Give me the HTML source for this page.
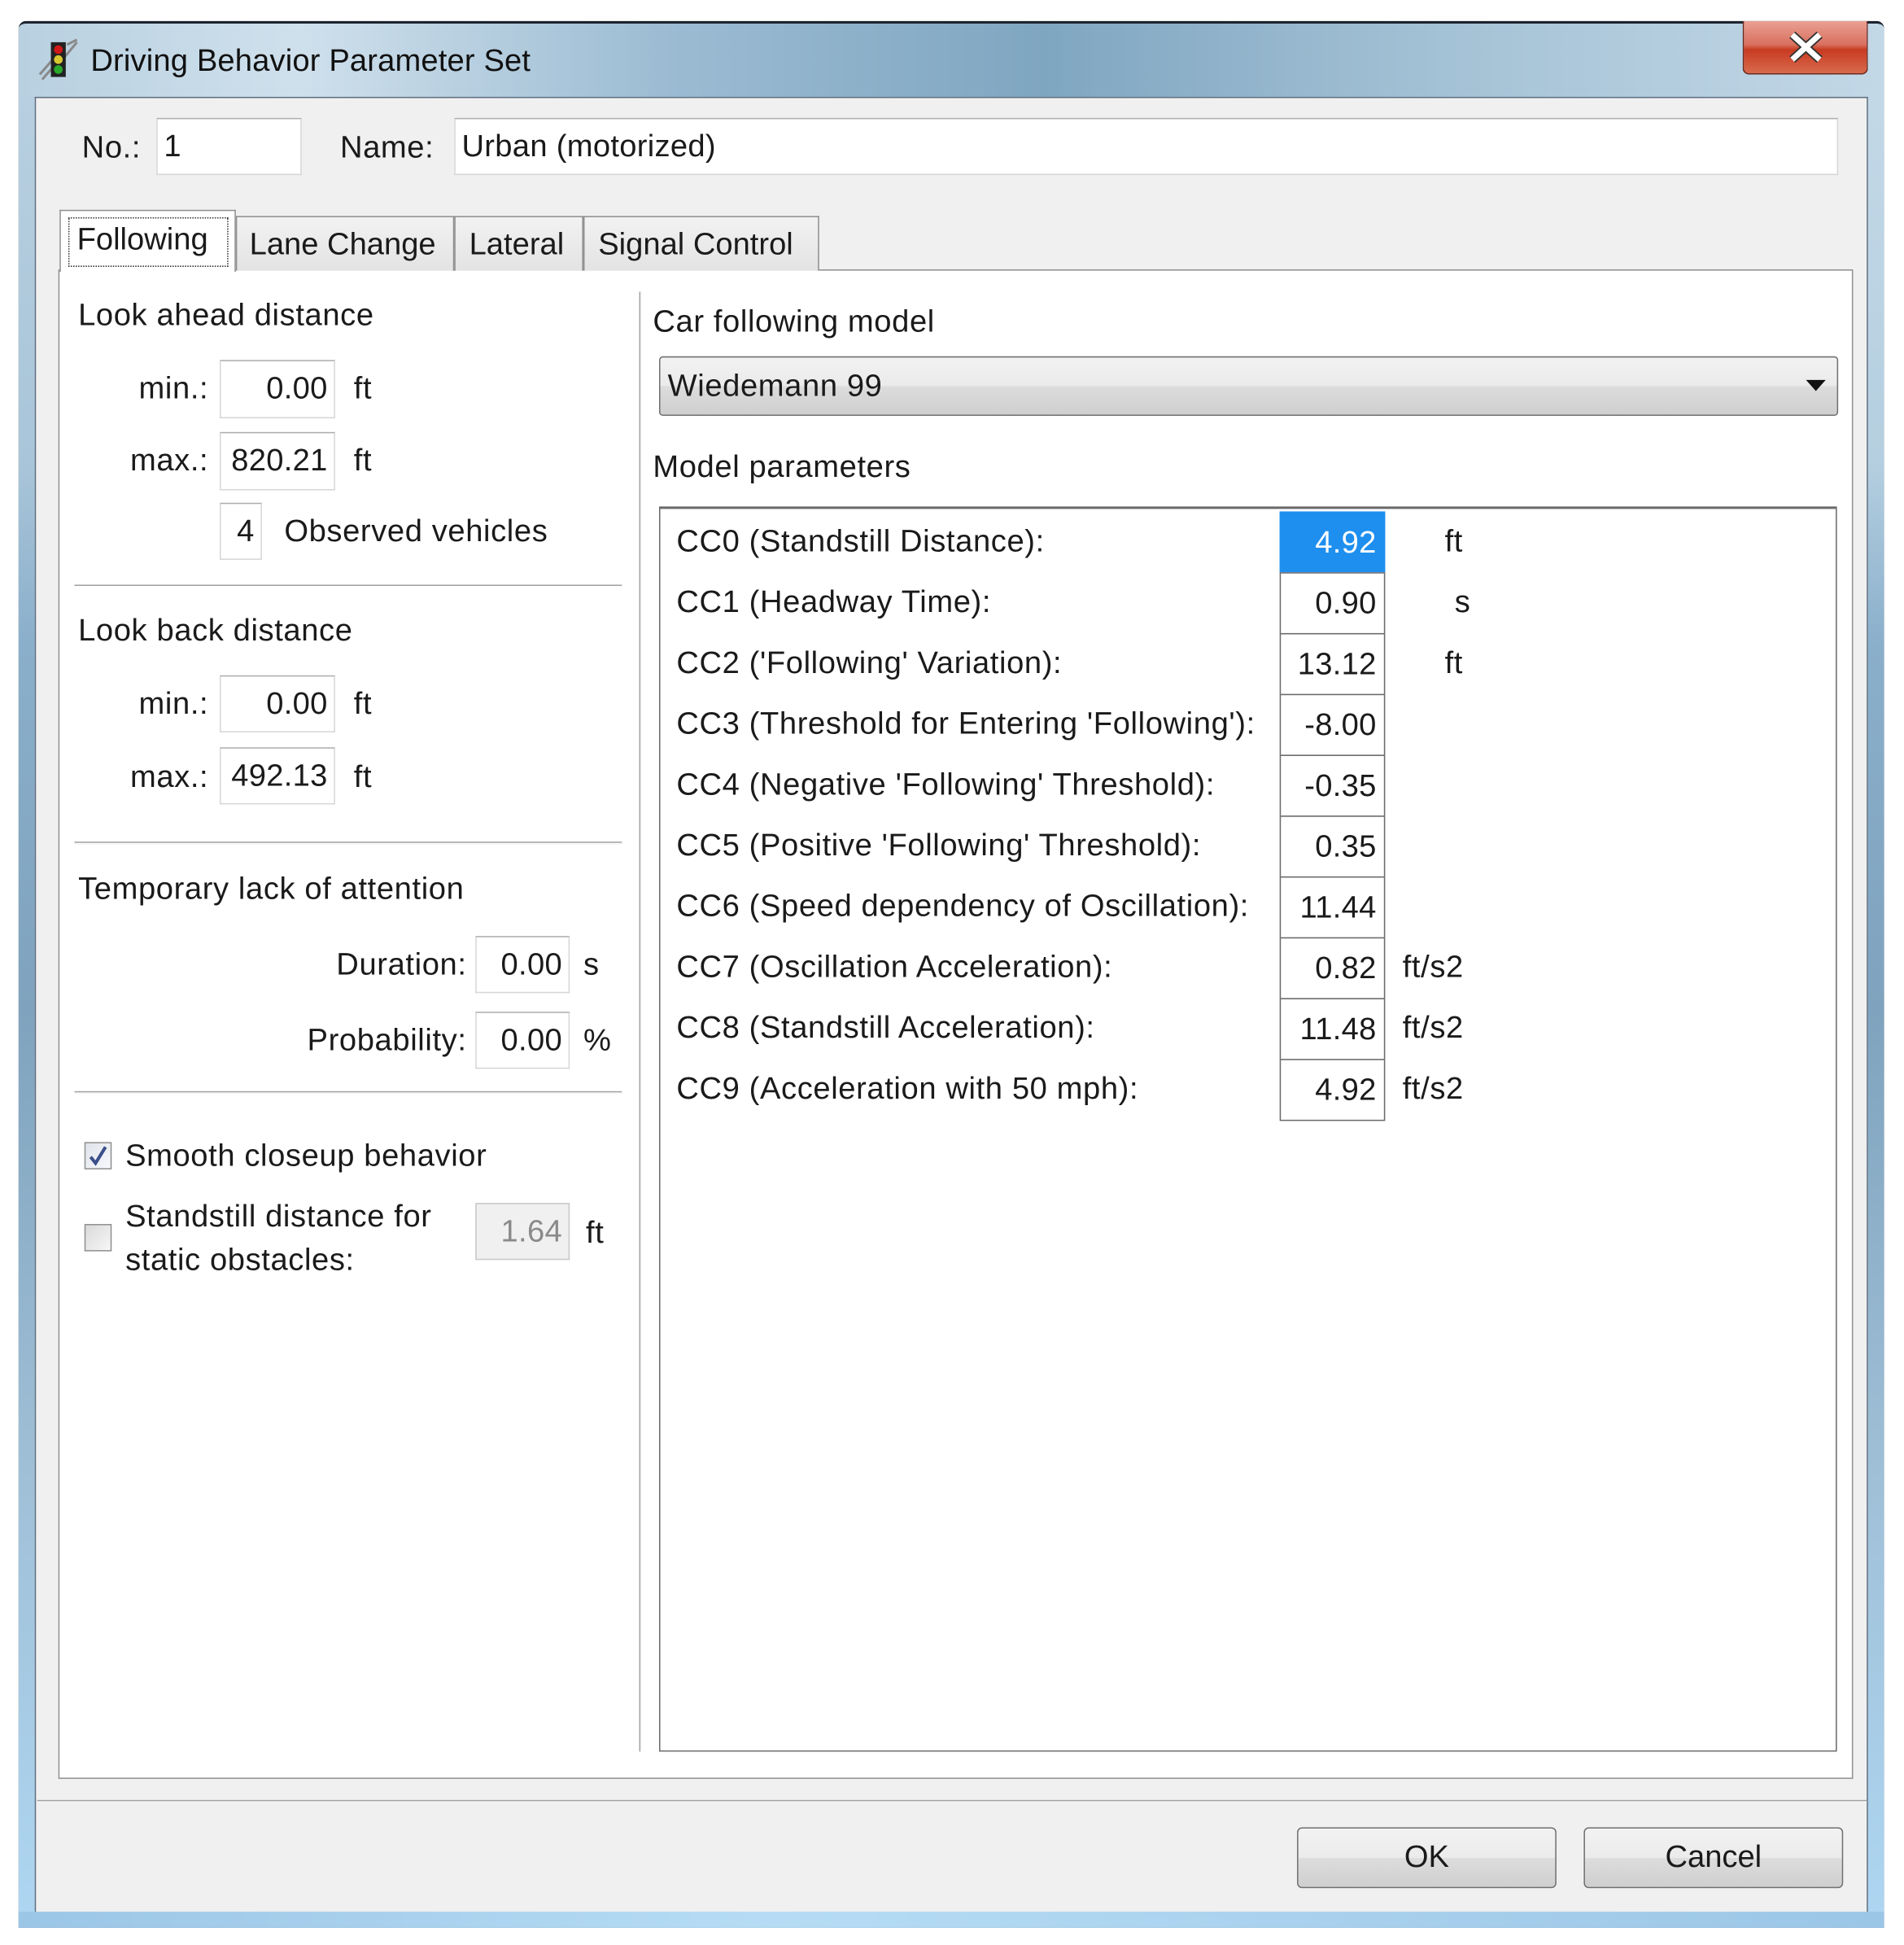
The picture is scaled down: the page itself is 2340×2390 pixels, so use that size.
<!DOCTYPE html>
<html><head><meta charset="utf-8"><style>
html,body{margin:0;padding:0;background:#fff;overflow:hidden}
#root{position:absolute;left:0;top:0;width:1534px;height:1567px;transform:scale(1.5254);transform-origin:0 0;font-family:"Liberation Sans",sans-serif;font-size:25px;color:#1a1a1a}
.a{position:absolute}
.t{position:absolute;line-height:30px;height:30px;white-space:nowrap;letter-spacing:0.4px}
.r{text-align:right}
.in{position:absolute;background:#fff;border:1px solid #d6d6d6;border-top-color:#adadad;box-sizing:border-box;line-height:44px;white-space:nowrap;text-align:right;padding-right:5px;letter-spacing:0.2px}
.hr{position:absolute;left:60px;width:441px;height:1px;background:#a0a0a0;border-bottom:1px solid #fff}
.cell{position:absolute;left:1031px;width:85px;height:50px;border:1px solid #6a6a6a;box-sizing:border-box;text-align:right;padding-right:6px;line-height:48px;background:#fff;letter-spacing:0.2px}
.btn{position:absolute;height:49px;border:1px solid #707070;border-radius:4px;box-sizing:border-box;background:linear-gradient(#f2f2f2 0%,#ebebeb 50%,#dddddd 51%,#cfcfcf 100%);text-align:center;line-height:47px}
</style></head><body><div id="root">
<div class="a" style="left:15px;top:17px;width:1503px;height:1536px;background:linear-gradient(90deg,#8fb4cf,#a9c8dd 40%,#8fb1c9 60%,#b9d3e4);border:1px solid #2a2a2a;border-radius:6px 6px 0 0;box-sizing:border-box"></div>
<div class="a" style="left:15px;top:17px;width:1503px;height:62px;background:linear-gradient(90deg,#b8d0e0 0%,#cfe0ec 15%,#9bbbd2 35%,#7fa6c1 55%,#a2c0d4 75%,#c3d8e7 100%);border-top:2px solid #1c2430;border-radius:6px 6px 0 0;box-sizing:border-box"></div>
<div class="a" style="left:15px;top:78px;width:14px;height:1472px;background:linear-gradient(#b7cfe0,#a9c5d9 20%,#8aafcb 30%,#7fa3be 50%,#9fbfd6 75%,#aed6f2)"></div>
<div class="a" style="left:1505px;top:78px;width:13px;height:1472px;background:linear-gradient(#c3d8e7,#b5cfe0 20%,#8aafcb 30%,#7fa3be 50%,#9fbfd6 75%,#aed6f2)"></div>
<div class="a" style="left:15px;top:1540px;width:1503px;height:13px;background:linear-gradient(90deg,#9cc6e6,#b6dcf5 40%,#9cc6e6)"></div>
<svg class="a" style="left:28px;top:30px" width="40" height="36" viewBox="0 0 40 36"><path d="M4 30 L18 14 M6 34 L20 18" stroke="#8a8a8a" stroke-width="2"/><path d="M26 6 L34 2 M24 16 L34 4" stroke="#8a8a8a" stroke-width="2"/><rect x="13" y="4" width="12" height="28" fill="#222"/><circle cx="19" cy="10" r="3.5" fill="#d01818"/><circle cx="19" cy="18" r="3.5" fill="#d8c830"/><circle cx="19" cy="26" r="3.5" fill="#2aa82a"/></svg>
<div class="t" style="left:73px;top:34px;font-size:25px;color:#111;letter-spacing:0.1px">Driving Behavior Parameter Set</div>
<div class="a" style="left:1404px;top:17px;width:101px;height:43px;border:1px solid #6b2a20;border-top:none;border-radius:0 0 5px 5px;background:linear-gradient(#e9a093 0%,#d9705f 45%,#c83b22 55%,#d86a4c 100%);box-sizing:border-box"></div>
<svg class="a" style="left:1440px;top:25px" width="30" height="26" viewBox="0 0 30 26"><path d="M4 3 L26 23 M26 3 L4 23" stroke="#333" stroke-width="7"/><path d="M4 3 L26 23 M26 3 L4 23" stroke="#fff" stroke-width="4.5"/></svg>
<div class="a" style="left:28px;top:78px;width:1477px;height:1462px;background:#f0f0f0;border:1px solid #5d6f80;border-bottom:none;box-sizing:border-box"></div>
<div class="t" style="left:66px;top:104px">No.:</div>
<div class="in" style="left:126px;top:95px;width:117px;height:46px;text-align:left;padding-left:5px">1</div>
<div class="t" style="left:274px;top:104px">Name:</div>
<div class="in" style="left:366px;top:95px;width:1115px;height:46px;text-align:left;padding-left:5px">Urban (motorized)</div>
<div class="a" style="left:47px;top:217px;width:1446px;height:1216px;background:#fff;border:1px solid #8e8f8f;box-sizing:border-box"></div>
<div class="a" style="left:190px;top:174px;width:176px;height:44px;background:linear-gradient(#f2f2f2,#e3e3e3);border:1px solid #8e8f8f;border-bottom:none;box-sizing:border-box"></div>
<div class="a" style="left:366px;top:174px;width:104px;height:44px;background:linear-gradient(#f2f2f2,#e3e3e3);border:1px solid #8e8f8f;border-bottom:none;box-sizing:border-box"></div>
<div class="a" style="left:470px;top:174px;width:190px;height:44px;background:linear-gradient(#f2f2f2,#e3e3e3);border:1px solid #8e8f8f;border-bottom:none;box-sizing:border-box"></div>
<div class="a" style="left:48px;top:169px;width:142px;height:50px;background:#fff;border:1px solid #8e8f8f;border-bottom:none;box-sizing:border-box"></div>
<div class="a" style="left:55px;top:175px;width:129px;height:40px;border:1px dotted #333;box-sizing:border-box"></div>
<div class="t" style="left:62px;top:178px;letter-spacing:0">Following</div>
<div class="t" style="left:201px;top:182px;letter-spacing:0">Lane Change</div>
<div class="t" style="left:378px;top:182px;letter-spacing:0">Lateral</div>
<div class="t" style="left:482px;top:182px;letter-spacing:0">Signal Control</div>
<div class="t" style="left:63px;top:239px">Look ahead distance</div>
<div class="t r" style="left:60px;width:108px;top:298px">min.:</div>
<div class="in" style="left:177px;top:290px;width:93px;height:47px">0.00</div>
<div class="t" style="left:285px;top:298px">ft</div>
<div class="t r" style="left:60px;width:108px;top:356px">max.:</div>
<div class="in" style="left:177px;top:348px;width:93px;height:47px">820.21</div>
<div class="t" style="left:285px;top:356px">ft</div>
<div class="in" style="left:177px;top:405px;width:34px;height:46px">4</div>
<div class="t" style="left:229px;top:413px">Observed vehicles</div>
<div class="hr" style="top:471px"></div>
<div class="t" style="left:63px;top:493px">Look back distance</div>
<div class="t r" style="left:60px;width:108px;top:552px">min.:</div>
<div class="in" style="left:177px;top:544px;width:93px;height:46px">0.00</div>
<div class="t" style="left:285px;top:552px">ft</div>
<div class="t r" style="left:60px;width:108px;top:611px">max.:</div>
<div class="in" style="left:177px;top:602px;width:93px;height:46px">492.13</div>
<div class="t" style="left:285px;top:611px">ft</div>
<div class="hr" style="top:678px"></div>
<div class="t" style="left:63px;top:701px">Temporary lack of attention</div>
<div class="t r" style="left:200px;width:176px;top:762px">Duration:</div>
<div class="in" style="left:383px;top:754px;width:76px;height:46px">0.00</div>
<div class="t" style="left:470px;top:762px">s</div>
<div class="t r" style="left:200px;width:176px;top:823px">Probability:</div>
<div class="in" style="left:383px;top:815px;width:76px;height:46px">0.00</div>
<div class="t" style="left:470px;top:823px">%</div>
<div class="hr" style="top:879px"></div>
<div class="a" style="left:68px;top:920px;width:22px;height:22px;border:1px solid #8e8f8f;box-sizing:border-box;background:linear-gradient(135deg,#dfe3ea,#f8f9fb)"></div>
<svg class="a" style="left:70px;top:921px" width="18" height="20" viewBox="0 0 18 20"><path d="M3 11 L7 16 L15 3" stroke="#3a4f8a" stroke-width="2.6" fill="none"/></svg>
<div class="t" style="left:101px;top:916px">Smooth closeup behavior</div>
<div class="a" style="left:68px;top:986px;width:22px;height:22px;border:1px solid #8e8f8f;box-sizing:border-box;background:linear-gradient(135deg,#d9d9d9,#f7f7f7)"></div>
<div class="t" style="left:101px;top:965px">Standstill distance for</div>
<div class="t" style="left:101px;top:1000px">static obstacles:</div>
<div class="in" style="left:383px;top:969px;width:76px;height:46px;background:#f0f0f0;color:#8a8a8a;border-color:#c8c8c8">1.64</div>
<div class="t" style="left:472px;top:978px">ft</div>
<div class="a" style="left:515px;top:235px;width:1px;height:1176px;background:#a0a0a0;border-right:1px solid #fff"></div>
<div class="t" style="left:526px;top:244px">Car following model</div>
<div class="a" style="left:531px;top:287px;width:950px;height:48px;border:1px solid #707070;border-radius:3px;box-sizing:border-box;background:linear-gradient(#f2f2f2 0%,#ebebeb 48%,#dcdcdc 52%,#cfcfcf 100%)"></div>
<div class="t" style="left:538px;top:296px">Wiedemann 99</div>
<svg class="a" style="left:1455px;top:306px" width="16" height="10" viewBox="0 0 16 10"><path d="M0 0 L16 0 L8 9 Z" fill="#111"/></svg>
<div class="t" style="left:526px;top:361px">Model parameters</div>
<div class="a" style="left:531px;top:408px;width:949px;height:1003px;border:1px solid #6a6a6a;border-top-width:2px;box-sizing:border-box;background:#fff"></div>
<div class="t" style="left:545px;top:421px">CC0 (Standstill Distance):</div>
<div class="t" style="left:545px;top:470px">CC1 (Headway Time):</div>
<div class="t" style="left:545px;top:519px">CC2 ('Following' Variation):</div>
<div class="t" style="left:545px;top:568px">CC3 (Threshold for Entering 'Following'):</div>
<div class="t" style="left:545px;top:617px">CC4 (Negative 'Following' Threshold):</div>
<div class="t" style="left:545px;top:666px">CC5 (Positive 'Following' Threshold):</div>
<div class="t" style="left:545px;top:715px">CC6 (Speed dependency of Oscillation):</div>
<div class="t" style="left:545px;top:764px">CC7 (Oscillation Acceleration):</div>
<div class="t" style="left:545px;top:813px">CC8 (Standstill Acceleration):</div>
<div class="t" style="left:545px;top:862px">CC9 (Acceleration with 50 mph):</div>
<div class="cell" style="top:412px;background:#1e8fef;color:#fff;border-color:#1e8fef">4.92</div>
<div class="cell" style="top:461px">0.90</div>
<div class="cell" style="top:510px">13.12</div>
<div class="cell" style="top:559px">-8.00</div>
<div class="cell" style="top:608px">-0.35</div>
<div class="cell" style="top:657px">0.35</div>
<div class="cell" style="top:706px">11.44</div>
<div class="cell" style="top:755px">0.82</div>
<div class="cell" style="top:804px">11.48</div>
<div class="cell" style="top:853px">4.92</div>
<div class="t" style="left:1164px;top:421px">ft</div>
<div class="t" style="left:1172px;top:470px">s</div>
<div class="t" style="left:1164px;top:519px">ft</div>
<div class="t" style="left:1130px;top:764px">ft/s2</div>
<div class="t" style="left:1130px;top:813px">ft/s2</div>
<div class="t" style="left:1130px;top:862px">ft/s2</div>
<div class="a" style="left:30px;top:1450px;width:1474px;height:1px;background:#a0a0a0;border-bottom:1px solid #fff"></div>
<div class="btn" style="left:1045px;top:1472px;width:209px">OK</div>
<div class="btn" style="left:1276px;top:1472px;width:209px">Cancel</div>
</div></body></html>
